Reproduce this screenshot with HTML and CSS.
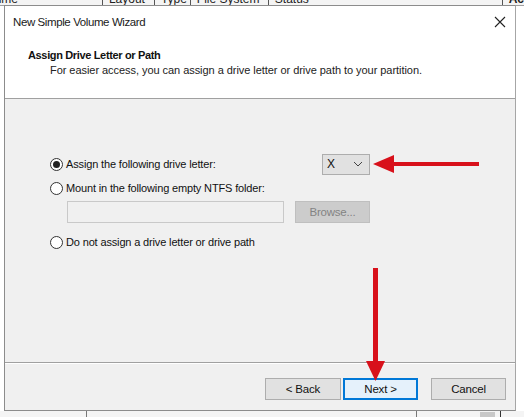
FILE: index.html
```html
<!DOCTYPE html>
<html lang="en">
<head>
    <meta charset="UTF-8">
    <title>New Simple Volume Wizard</title>
    <link rel="stylesheet" href="styles.css">
</head>
<body>
    <div class="desktop">
        <!-- disk management list behind the wizard -->
        <div class="list-header">
            <span class="col col-name">Volume</span>
            <span class="col col-layout">Layout</span>
            <span class="col col-type">Type</span>
            <span class="col col-fs">File System</span>
            <span class="col col-status">Status</span>
            <span class="col col-act">Ac</span>
        </div>
        <div class="behind-bottom">
            <span class="bb-line bb-1"></span>
            <span class="bb-line bb-2"></span>
            <span class="bb-box"></span>
            <span class="bb-line bb-3"></span>
        </div>

        <div class="dialog">
            <div class="dlg-head">
                <div class="titlebar">
                    <span class="title">New Simple Volume Wizard</span>
                    <svg class="close" width="12" height="12" viewBox="0 0 12 12">
                        <path d="M1 1 L11 11 M11 1 L1 11" stroke="#222" stroke-width="1.1" fill="none"/>
                    </svg>
                </div>
                <div class="page-title">Assign Drive Letter or Path</div>
                <div class="page-sub">For easier access, you can assign a drive letter or drive path to your partition.</div>
            </div>

            <div class="dlg-body">
                <div class="opt-row">
                    <label class="radio-label">
                        <span class="radio checked"></span>Assign the following drive letter:
                    </label>
                    <div class="combo">
                        <span>X</span>
                        <svg width="10" height="6" viewBox="0 0 10 6">
                            <path d="M1 1 L5 5 L9 1" stroke="#444" stroke-width="1" fill="none"/>
                        </svg>
                    </div>
                </div>
                <label class="radio-label row-mount">
                    <span class="radio"></span>Mount in the following empty NTFS folder:
                </label>
                <div class="folder-row">
                    <div class="textbox"></div>
                    <div class="btn disabled">Browse...</div>
                </div>
                <label class="radio-label row-none">
                    <span class="radio"></span>Do not assign a drive letter or drive path
                </label>
            </div>

            <div class="dlg-foot">
                <div class="btn">&lt; Back</div>
                <div class="btn default">Next &gt;</div>
                <div class="btn cancel">Cancel</div>
            </div>
        </div>

        <!-- red annotation arrows -->
        <svg class="arrow arrow-h" width="110" height="22" viewBox="0 0 110 22">
            <rect x="18" y="8" width="88" height="4" fill="#d8111b"/>
            <polygon points="0,10 21,1 21,19" fill="#d8111b"/>
        </svg>
        <svg class="arrow arrow-v" width="22" height="116" viewBox="0 0 22 116">
            <rect x="8" y="0" width="5" height="96" fill="#d8111b"/>
            <polygon points="1,93 20,93 10.5,113" fill="#d8111b"/>
        </svg>
    </div>
</body>
</html>
```

FILE: styles.css
```css
body {
    margin: 0;
    font-family: "Liberation Sans", Arial, sans-serif;
    font-size: 11px;
    color: #111;
    background: #fff;
}
.desktop {
    position: relative;
    width: 524px;
    height: 417px;
    overflow: hidden;
    background: #fff;
}
.list-header {
    display: flex;
    height: 5px;
    overflow: hidden;
    border-bottom: 1px solid #a0a0a0;
    background: #f4f4f4;
}
.col {
    display: block;
    margin-top: -8px;
    line-height: 14px;
    font-size: 12px;
    padding-left: 6px;
    border-left: 1px solid #555;
    box-sizing: border-box;
    color: #222;
}
.col-name { border-left: none; padding-left: 0; margin-left: -22px; width: 124px; }
.col-layout { width: 52px; }
.col-type { width: 36px; }
.col-fs { width: 78px; }
.col-status { width: 234px; }
.col-act { font-weight: bold; }

.behind-bottom {
    position: absolute;
    left: 0;
    right: 0;
    bottom: 0;
    height: 6px;
    background: #f4f4f4;
}
.bb-line {
    position: absolute;
    top: 0;
    bottom: 0;
    width: 1px;
    background: #777;
}
.bb-1 { left: 86px; }
.bb-2 { left: 416px; }
.bb-3 { left: 500px; background: #333; }
.bb-box {
    position: absolute;
    left: 480px;
    width: 15px;
    top: 1px;
    bottom: 0;
    background: #c8c8c8;
}

.dialog {
    position: absolute;
    left: 4px;
    top: 5px;
    width: 512px;
    height: 406px;
    box-sizing: border-box;
    border: 1px solid #8c8c8c;
    border-right-color: #a6a6a6;
    display: flex;
    flex-direction: column;
    background: #f0f0f0;
}
.dlg-head {
    background: #fff;
    height: 92px;
    border-bottom: 1px solid #a0a0a0;
}
.titlebar {
    display: flex;
    align-items: center;
    justify-content: space-between;
    height: 31px;
    padding: 0 8px 0 8px;
}
.title {
    font-size: 11.5px;
    letter-spacing: -0.4px;
    color: #1a1a1a;
}
.close {
    margin-right: 1px;
}
.page-title {
    margin: 12px 0 0 23px;
    font-weight: bold;
    font-size: 11px;
    letter-spacing: -0.35px;
}
.page-sub {
    margin: 3px 0 0 45px;
    font-size: 11px;
    letter-spacing: -0.05px;
    color: #222;
}

.dlg-body {
    flex: 1;
    padding: 54px 0 0 45px;
    border-bottom: 1px solid #a0a0a0;
    box-shadow: 0 1px 0 #fff;
}
.opt-row {
    display: flex;
    align-items: center;
    height: 22px;
}
.opt-row .radio-label {
    width: 272px;
}
.radio-label {
    display: flex;
    align-items: center;
    height: 14px;
    letter-spacing: -0.15px;
}
.radio {
    width: 11px;
    height: 11px;
    border: 1px solid #333;
    border-radius: 50%;
    margin-right: 3px;
    background: #fff;
    display: flex;
    align-items: center;
    justify-content: center;
    box-sizing: content-box;
}
.radio.checked::after {
    content: "";
    width: 7px;
    height: 7px;
    border-radius: 50%;
    background: #222;
}
.combo {
    width: 48px;
    height: 21px;
    box-sizing: border-box;
    border: 1px solid #adadad;
    background: #e1e1e1;
    display: flex;
    align-items: center;
    justify-content: space-between;
    padding: 0 6px 0 4px;
    font-size: 12px;
}
.row-mount {
    margin-top: 6px;
}
.folder-row {
    display: flex;
    margin: 6px 0 0 17px;
}
.textbox {
    width: 217px;
    height: 22px;
    box-sizing: border-box;
    border: 1px solid #c9c9c9;
    background: #f0f0f0;
}
.row-none {
    margin-top: 12px;
}

.btn {
    width: 76px;
    height: 22px;
    box-sizing: border-box;
    border: 1px solid #adadad;
    background: #e1e1e1;
    display: flex;
    align-items: center;
    justify-content: center;
    font-size: 11.5px;
    letter-spacing: -0.2px;
}
.btn.disabled {
    margin-left: 11px;
    width: 75px;
    background: #cccccc;
    border-color: #bfbfbf;
    color: #838383;
}
.dlg-foot {
    height: 47px;
    display: flex;
    align-items: flex-start;
    justify-content: flex-end;
    padding: 15px 9px 0 0;
    box-sizing: border-box;
}
.btn.default {
    margin-left: 2px;
    width: 75px;
    border: 2px solid #0078d7;
    background: #e5f1fb;
}
.btn.cancel {
    margin-left: 13px;
    width: 75px;
}

.arrow {
    position: absolute;
}
.arrow-h {
    left: 373px;
    top: 154px;
}
.arrow-v {
    left: 365px;
    top: 268px;
}
```
